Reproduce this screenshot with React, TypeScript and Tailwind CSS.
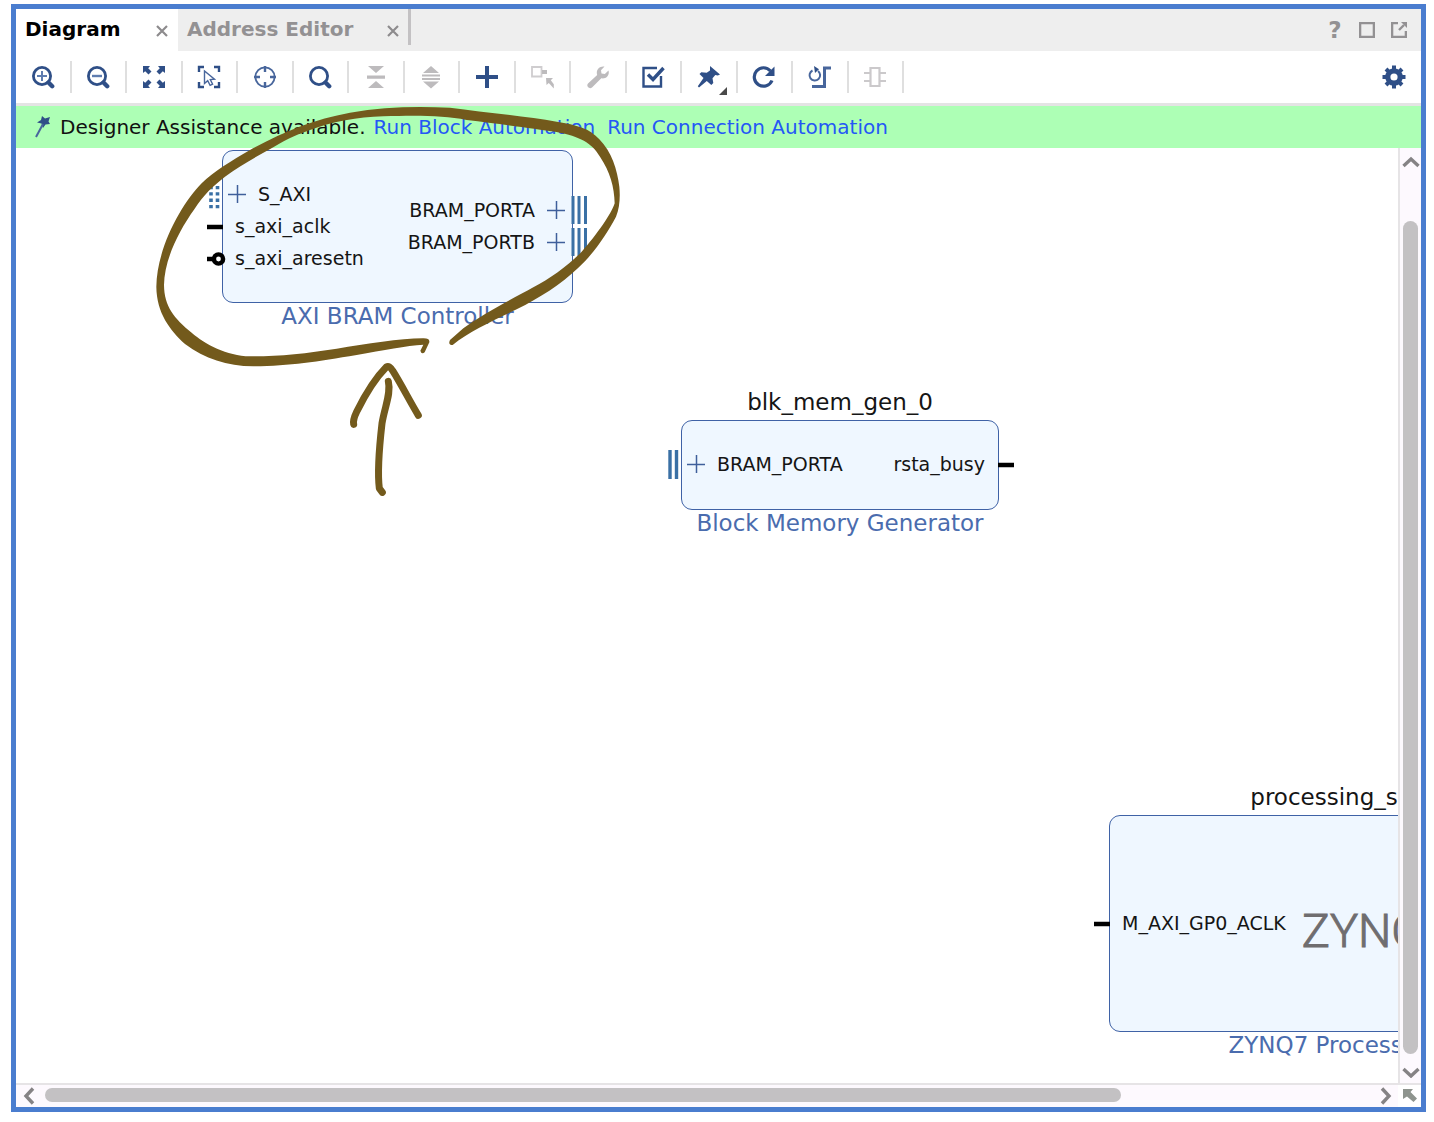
import type { ReactNode } from "react";

const NAVY = "#2f4f87";
const GREY = "#bdbbbd";

function Icon({ children, size = 24 }: { children: ReactNode; size?: number }) {
  return (
    <svg width={size} height={size} viewBox="0 0 24 24" fill="none" aria-hidden="true" className="shrink-0">
      {children}
    </svg>
  );
}

const lens = (
  <>
    <circle cx="11" cy="11" r="8.6" stroke={NAVY} strokeWidth="2.8" />
    <path d="M17.5 17.5 L21.2 21.2" stroke={NAVY} strokeWidth="4.4" strokeLinecap="round" />
  </>
);

const tools: { label: string; icon: ReactNode; disabled?: boolean; menu?: boolean }[] = [
  {
    label: "Zoom in",
    icon: (
      <>
        {lens}
        <path d="M6 11h10M11 6v10" stroke="#5f7db0" strokeWidth="2" />
      </>
    ),
  },
  {
    label: "Zoom out",
    icon: (
      <>
        {lens}
        <path d="M6 11h10" stroke="#5f7db0" strokeWidth="2.4" />
      </>
    ),
  },
  {
    label: "Zoom fit",
    icon: (
      <>
        <path
          d="M1 1h7L6.200 3.200 9.500 6.500 6.500 9.500 3.200 6.200 1 8zM23 1v7L20.800 6.200 17.500 9.500 14.500 6.500 17.800 3.200 16 1zM1 23v-7l2.200 1.800L6.500 14.500l3 3L6.200 20.800 8 23zM23 23h-7l1.800-2.200L14.500 17.500l3-3 3.300 3.300L23 16z"
          fill={NAVY}
        />
      </>
    ),
  },
  {
    label: "Select area",
    icon: (
      <>
        <path d="M2 7V2h5M17 2h5v5M2 17v5h5M17 22h5v-5" stroke={NAVY} strokeWidth="2.4" />
        <path d="M7.500 6v12.500l3.200-2.800 2.400 4.600 2.500-1.200-2.300-4.500 4.200-.4z" stroke="#48669c" strokeWidth="1.400" />
      </>
    ),
  },
  {
    label: "Center view",
    icon: (
      <>
        <circle cx="12" cy="12" r="9.600" stroke="#48669c" strokeWidth="1.800" />
        <path d="M12 1v6M12 17v6M1 12h6M17 12h6" stroke="#48669c" strokeWidth="2.400" />
      </>
    ),
  },
  { label: "Search", icon: lens },
  {
    label: "Collapse all",
    disabled: true,
    icon: <path d="M4 1h16l-8 7zM3 10.500h18v3.200H3zM4 23h16l-8-7z" fill={GREY} />,
  },
  {
    label: "Expand all",
    disabled: true,
    icon: <path d="M12 1l8 7H4zM3 9.500h18v2H3zM3 13h18v2H3zM4 16.500h16L12 23.500z" fill={GREY} />,
  },
  { label: "Add IP", icon: <path d="M12 1v22M1 12h22" stroke={NAVY} strokeWidth="4" /> },
  {
    label: "Make connection",
    disabled: true,
    icon: (
      <>
        <path d="M2 2h9.500v9.500H2z" stroke="#cfcdcf" strokeWidth="1.800" />
        <path d="M12 5h5v4h-5z" fill={GREY} />
        <path d="M16 13h7l-2.200 2.200 3 4v4.300l-5-5.500-2.300 2z" fill={GREY} />
      </>
    ),
  },
  {
    label: "Customize block",
    disabled: true,
    icon: (
      <path
        d="M22.500 5.500c1.300 4.500-2 8.700-7.200 7.800L6 22.500c-2.600 2.200-6.300-1.200-4-4l9.200-8.400C9.500 5 13.500.6 18.500 1.500L15 5.200l.5 3.300 3.300.5z"
        fill={GREY}
      />
    ),
  },
  {
    label: "Validate design",
    icon: (
      <>
        <path d="M16 3H2.500v18.500H20V11" stroke={NAVY} strokeWidth="2.400" />
        <path d="M7 9.500l5 5L22.500 3" stroke={NAVY} strokeWidth="3.400" />
      </>
    ),
  },
  {
    label: "Pin",
    menu: true,
    icon: (
      <path
        d="M13 1l10 8.500-2.200 1-2.500-.4-2.800 3.200.8 4.700-2 2-4.500-4L2 22.500.8 21.300 6.500 13 2.500 9l1.800-1.700 5.400.4L13 5.500z"
        fill={NAVY}
      />
    ),
  },
  {
    label: "Regenerate layout",
    icon: (
      <>
        <path d="M20 15.500A9.200 9.200 0 1 1 18.500 6" stroke={NAVY} strokeWidth="3.200" />
        <path d="M22.500 1.500v9.500H13z" fill={NAVY} />
      </>
    ),
  },
  {
    label: "Optimize routing",
    icon: (
      <>
        <path d="M4.500 5.500A5.300 5.300 0 1 0 10 6" stroke="#48669c" strokeWidth="2" />
        <path d="M6 1l5 3.200L7 8z" fill={NAVY} />
        <path d="M4 21.500h12.500V3H23" stroke="#48669c" strokeWidth="3" />
      </>
    ),
  },
  {
    label: "Show interfaces",
    disabled: true,
    icon: (
      <path d="M7.500 3h9v18h-9zM1 8h6M1 16h6M17 8h6M17 16h6" stroke="#cbc9cb" strokeWidth="2.200" />
    ),
  },
];

function Gear() {
  return (
    <Icon>
      <circle cx="12" cy="12" r="6.200" stroke={NAVY} strokeWidth="5.200" />
      <path
        d="M12 .5v4M12 19.500v4M.5 12h4M19.500 12h4M4 4l3 3M17 17l3 3M20 4l-3 3M7 17l-3 3"
        stroke={NAVY}
        strokeWidth="4"
      />
    </Icon>
  );
}

function Tab({ name, active, className }: { name: string; active?: boolean; className: string }) {
  return (
    <div className={`flex items-center justify-between pb-[2px] ${className}`}>
      <button
        type="button"
        role="tab"
        aria-selected={!!active}
        className={`text-[20px] leading-6 font-bold whitespace-nowrap ${active ? "text-black" : "text-[#939193]"}`}
      >
        {name}
      </button>
      <button type="button" aria-label={`Close ${name}`}>
        <svg width="12" height="16" viewBox="0 0 12 16" aria-hidden="true">
          <path d="M1 5l10 10M11 5L1 15" stroke="#8d8b8d" strokeWidth="2.200" />
        </svg>
      </button>
    </div>
  );
}

function Plus() {
  return (
    <svg width="18" height="18" viewBox="0 0 18 18" aria-hidden="true" className="shrink-0">
      <path d="M0 9.500h18M9.500 0v18" stroke="#3f5f9b" strokeWidth="1.500" />
    </svg>
  );
}

/** Connector stub on the outside of a block edge. */
function Pin({ kind, side }: { kind: "wire" | "reset" | "bus" | "bus2" | "dots"; side: "left" | "right" }) {
  const edge = side === "left" ? "right-full" : "left-full";
  return (
    <svg
      width="16"
      height="32"
      viewBox="0 0 16 32"
      aria-hidden="true"
      className={`absolute top-0 overflow-visible ${edge}`}
    >
      {kind === "wire" && <path d="M0 17h16" stroke="#000" strokeWidth="4.500" />}
      {kind === "reset" && (
        <>
          <path d="M0 17h8" stroke="#000" strokeWidth="4.500" />
          <circle cx="11.500" cy="17" r="4.600" stroke="#000" strokeWidth="4.400" fill="#fff" />
        </>
      )}
      {kind === "bus" && <path d="M1 2v28M7 2v28M13.500 2v28" stroke="#3a70a5" strokeWidth="3" />}
      {kind === "bus2" && <path d="M4 2v29M10.500 2v29" stroke="#3a70a5" strokeWidth="3.400" />}
      {kind === "dots" && (
        <path d="M4 8v24M10.500 8v24" stroke="#3a70a5" strokeWidth="3.600" strokeDasharray="3.300 3" />
      )}
    </svg>
  );
}

function Port({
  name,
  kind,
  side,
  expandable,
}: {
  name: string;
  kind: "wire" | "reset" | "bus" | "bus2" | "dots";
  side: "left" | "right";
  expandable?: boolean;
}) {
  const pad = side === "left" ? (expandable ? "pl-[5px]" : "pl-3") : expandable ? "pr-[7px]" : "pr-[13px]";
  return (
    <div className={`relative flex h-8 items-center gap-3 text-[19px] leading-8 text-[#151515] ${pad}`}>
      {side === "left" && expandable && <Plus />}
      <span>{name}</span>
      {side === "right" && expandable && <Plus />}
      <Pin kind={kind} side={side} />
    </div>
  );
}

function Block({
  title,
  type,
  className,
  bodyClass,
  children,
}: {
  title?: string;
  type: string;
  className: string;
  bodyClass: string;
  children: ReactNode;
}) {
  return (
    <div className={`absolute flex flex-col ${className}`}>
      {title && <div className="h-[34px] text-center text-[23px] leading-8 whitespace-nowrap text-[#151515]">{title}</div>}
      <div className={`flex justify-between rounded-[11px] border border-[#3f62a6] bg-[#eff7ff] ${bodyClass}`}>
        {children}
      </div>
      <div className="text-center text-[23px] leading-[26px] whitespace-nowrap text-[#4a6cae]">{type}</div>
    </div>
  );
}

function Chevron({ d, w, h }: { d: string; w: number; h: number }) {
  return (
    <svg width={w} height={h} viewBox={`0 0 ${w} ${h}`} fill="none" aria-hidden="true">
      <path d={d} stroke="#858385" strokeWidth="3.400" />
    </svg>
  );
}

function Annotation() {
  return (
    <svg
      width="480"
      height="400"
      viewBox="0 0 1440 1200"
      aria-hidden="true"
      className="pointer-events-none absolute top-[91px] left-[134px]"
    >
      <path
        d="M908 735C960 693 1030 662 1100 628C1170 592 1230 556 1285 503C1330 462 1370 403 1398 350C1409 325 1411 290 1408 260C1402 210 1385 155 1348 118C1320 85 1280 75 1220 65C1130 50 1000 36 900 23C800 18 700 20 600 38C490 58 400 95 300 150C245 182 190 215 155 250C95 310 20 445 19 560C20 640 60 690 105 732C165 776 230 798 310 799C420 798 500 785 620 765C700 750 770 737 820 734L811 752Q815 765 824 757L838 727Q840 714 818 715C750 715 650 732 560 746C470 760 380 770 300 769C230 767 165 733 125 698C72 655 43 620 42 555C43 480 85 395 133 328C160 285 190 257 225 230C265 200 310 175 355 150C400 124 430 107 480 90C550 64 620 52 700 49C800 46 880 46 950 60C1050 72 1150 85 1220 96C1290 110 1325 128 1350 170C1380 215 1393 260 1394 310C1385 340 1340 405 1295 455C1255 497 1200 535 1150 562C1090 595 1000 640 940 685L900 720Q893 735 908 735Z"
        fill="#735a1c"
      />
      <g fill="none" stroke="#735a1c" strokeLinecap="round" strokeLinejoin="round">
        <path d="M611 973Q608 960 620 935C650 875 675 835 709 801Q718 795 728 812C755 855 780 905 805 946" strokeWidth="21" />
        <path d="M715 844C724 880 704 920 696 970C688 1040 681 1110 688 1165L697 1177" strokeWidth="21" />
      </g>
    </svg>
  );
}

export default function App() {
  return (
    <div className="flex h-screen flex-col bg-white pt-1 pr-2 pb-[10px] pl-[11px] font-['DejaVu_Sans',sans-serif]">
      <main className="relative flex min-h-0 flex-1 flex-col border-[5px] border-[#4a7dcf] bg-white">
        <header className="flex h-[42px] shrink-0 items-stretch justify-between bg-[#eeeeee]">
          <div role="tablist" className="flex items-start">
            <Tab name="Diagram" active className="h-[42px] w-[162px] bg-white pr-[10px] pl-[9px]" />
            <Tab name="Address Editor" className="h-[42px] w-[230px] pr-[9px] pl-[9px]" />
            <div className="h-9 w-[3px] bg-[#c3c1c3]" />
          </div>
          <div className="flex items-center gap-4 pr-[14px]">
            <button type="button" aria-label="Help" className="w-4 text-[23px] leading-6 font-bold text-[#939193]">
              ?
            </button>
            <button type="button" aria-label="Maximize">
              <svg width="16" height="16" viewBox="0 0 16 16" fill="none" aria-hidden="true">
                <path d="M1 1h14v14H1z" stroke="#939193" strokeWidth="2.600" />
              </svg>
            </button>
            <button type="button" aria-label="Float">
              <svg width="16" height="16" viewBox="0 0 16 16" fill="none" aria-hidden="true">
                <path d="M7 1H1v14h14V9" stroke="#939193" strokeWidth="2.600" />
                <path d="M8 8l5-5" stroke="#939193" strokeWidth="2.400" />
                <path d="M10 0h6v6z" fill="#939193" />
              </svg>
            </button>
          </div>
        </header>

        <div role="toolbar" className="flex h-[52px] shrink-0 items-center justify-between bg-white pr-[15px]">
          <div className="flex w-[888px] items-center">
            {tools.map((t) => (
              <button
                key={t.label}
                type="button"
                aria-label={t.label}
                disabled={t.disabled}
                className="relative flex h-8 flex-1 items-center justify-center border-r-2 border-[#dfdfdf]"
              >
                <Icon>{t.icon}</Icon>
                {t.menu && (
                  <svg width="8" height="8" viewBox="0 0 8 8" aria-hidden="true" className="absolute right-[9px] -bottom-[2px]">
                    <path d="M8 0v8H0z" fill="#4a4a4a" />
                  </svg>
                )}
              </button>
            ))}
          </div>
          <button type="button" aria-label="Settings">
            <Gear />
          </button>
        </div>

        <div className="flex h-[45px] shrink-0 items-center border-t-[3px] border-[#e4e4e4] bg-[#adffb5] pl-[18px] text-[20px] leading-6 whitespace-nowrap">
          <svg width="18" height="24" viewBox="0 0 18 24" aria-hidden="true" className="mr-2">
            <path d="M8 1l3 2.500L16 2l-1.500 4.500L16 9l-4.500.5L9 13 7.500 8.500 3 7.500l4-2.500z" fill={NAVY} />
            <path d="M9 9L2 22" stroke="#48669c" strokeWidth="2" />
          </svg>
          <p className="text-[#111]">Designer Assistance available.</p>
          <a href="#block" className="ml-2 text-[#2458f5]">
            Run Block Automation
          </a>
          <a href="#connection" className="ml-3 text-[#2458f5]">
            Run Connection Automation
          </a>
        </div>

        <div className="flex min-h-0 flex-1">
          <section aria-label="Block design" className="relative min-w-0 flex-1 overflow-hidden bg-white">
            <Block type="AXI BRAM Controller" className="top-[2px] left-[206px] w-[351px]" bodyClass="h-[153px]">
              <div className="pt-[27px]">
                <Port name="S_AXI" kind="dots" side="left" expandable />
                <Port name="s_axi_aclk" kind="wire" side="left" />
                <Port name="s_axi_aresetn" kind="reset" side="left" />
              </div>
              <div className="flex flex-col items-end pt-[43px]">
                <Port name="BRAM_PORTA" kind="bus" side="right" expandable />
                <Port name="BRAM_PORTB" kind="bus" side="right" expandable />
              </div>
            </Block>

            <Block
              title="blk_mem_gen_0"
              type="Block Memory Generator"
              className="top-[238px] left-[665px] w-[318px]"
              bodyClass="h-[90px] items-center pb-[2px]"
            >
              <Port name="BRAM_PORTA" kind="bus2" side="left" expandable />
              <Port name="rsta_busy" kind="wire" side="right" />
            </Block>

            <Block
              title="processing_system7_0"
              type="ZYNQ7 Processing System"
              className="top-[633px] left-[1092px] w-[544px]"
              bodyClass="h-[217px] items-center justify-start! pb-[2px] ml-px"
            >
              <Port name="M_AXI_GP0_ACLK" kind="wire" side="left" />
              <span className="mt-4 ml-4 font-['Roboto',sans-serif] text-[47px] leading-none font-light text-[#6f6d6f] [-webkit-text-stroke:1px_#6f6d6f]">
                ZYNQ
              </span>
            </Block>
          </section>

          <div className="flex w-[23px] flex-col items-center border-l-2 border-[#e6e4e6] bg-[#fdf9fe]">
            <button type="button" aria-label="Scroll up" className="flex h-7 items-center">
              <Chevron d="M1.500 10L9 3l7.500 7" w={18} h={12} />
            </button>
            <div className="flex w-[15px] flex-1 pt-[45px] pb-[6px]">
              <div className="w-full rounded-full bg-[#c3c1c3]" />
            </div>
            <button type="button" aria-label="Scroll down" className="flex h-[23px] items-center">
              <Chevron d="M1.500 3L9 10l7.500-7" w={18} h={12} />
            </button>
          </div>
        </div>

        <div className="flex h-6 shrink-0 items-center border-t-2 border-[#e6e4e6] bg-[#fdf9fe]">
          <button type="button" aria-label="Scroll left" className="flex w-[29px] justify-center pr-1">
            <Chevron d="M10 1.500L3 9l7 7.500" w={12} h={18} />
          </button>
          <div className="flex-1 pb-[2px]">
            <div className="h-[14px] w-[81%] rounded-full bg-[#c3c1c3]" />
          </div>
          <button type="button" aria-label="Scroll right" className="flex w-[24px] justify-center">
            <Chevron d="M2 1.500L9 9l-7 7.500" w={12} h={18} />
          </button>
          <button type="button" aria-label="Overview" className="flex h-full w-[23px] items-center justify-center bg-white">
            <svg width="14" height="14" viewBox="0 0 14 14" aria-hidden="true">
              <path d="M0 0h10L7.500 3 14 9.500 10.500 13 4 7.500 0 10z" fill="#8e948e" />
            </svg>
          </button>
        </div>

        <Annotation />
      </main>
    </div>
  );
}
